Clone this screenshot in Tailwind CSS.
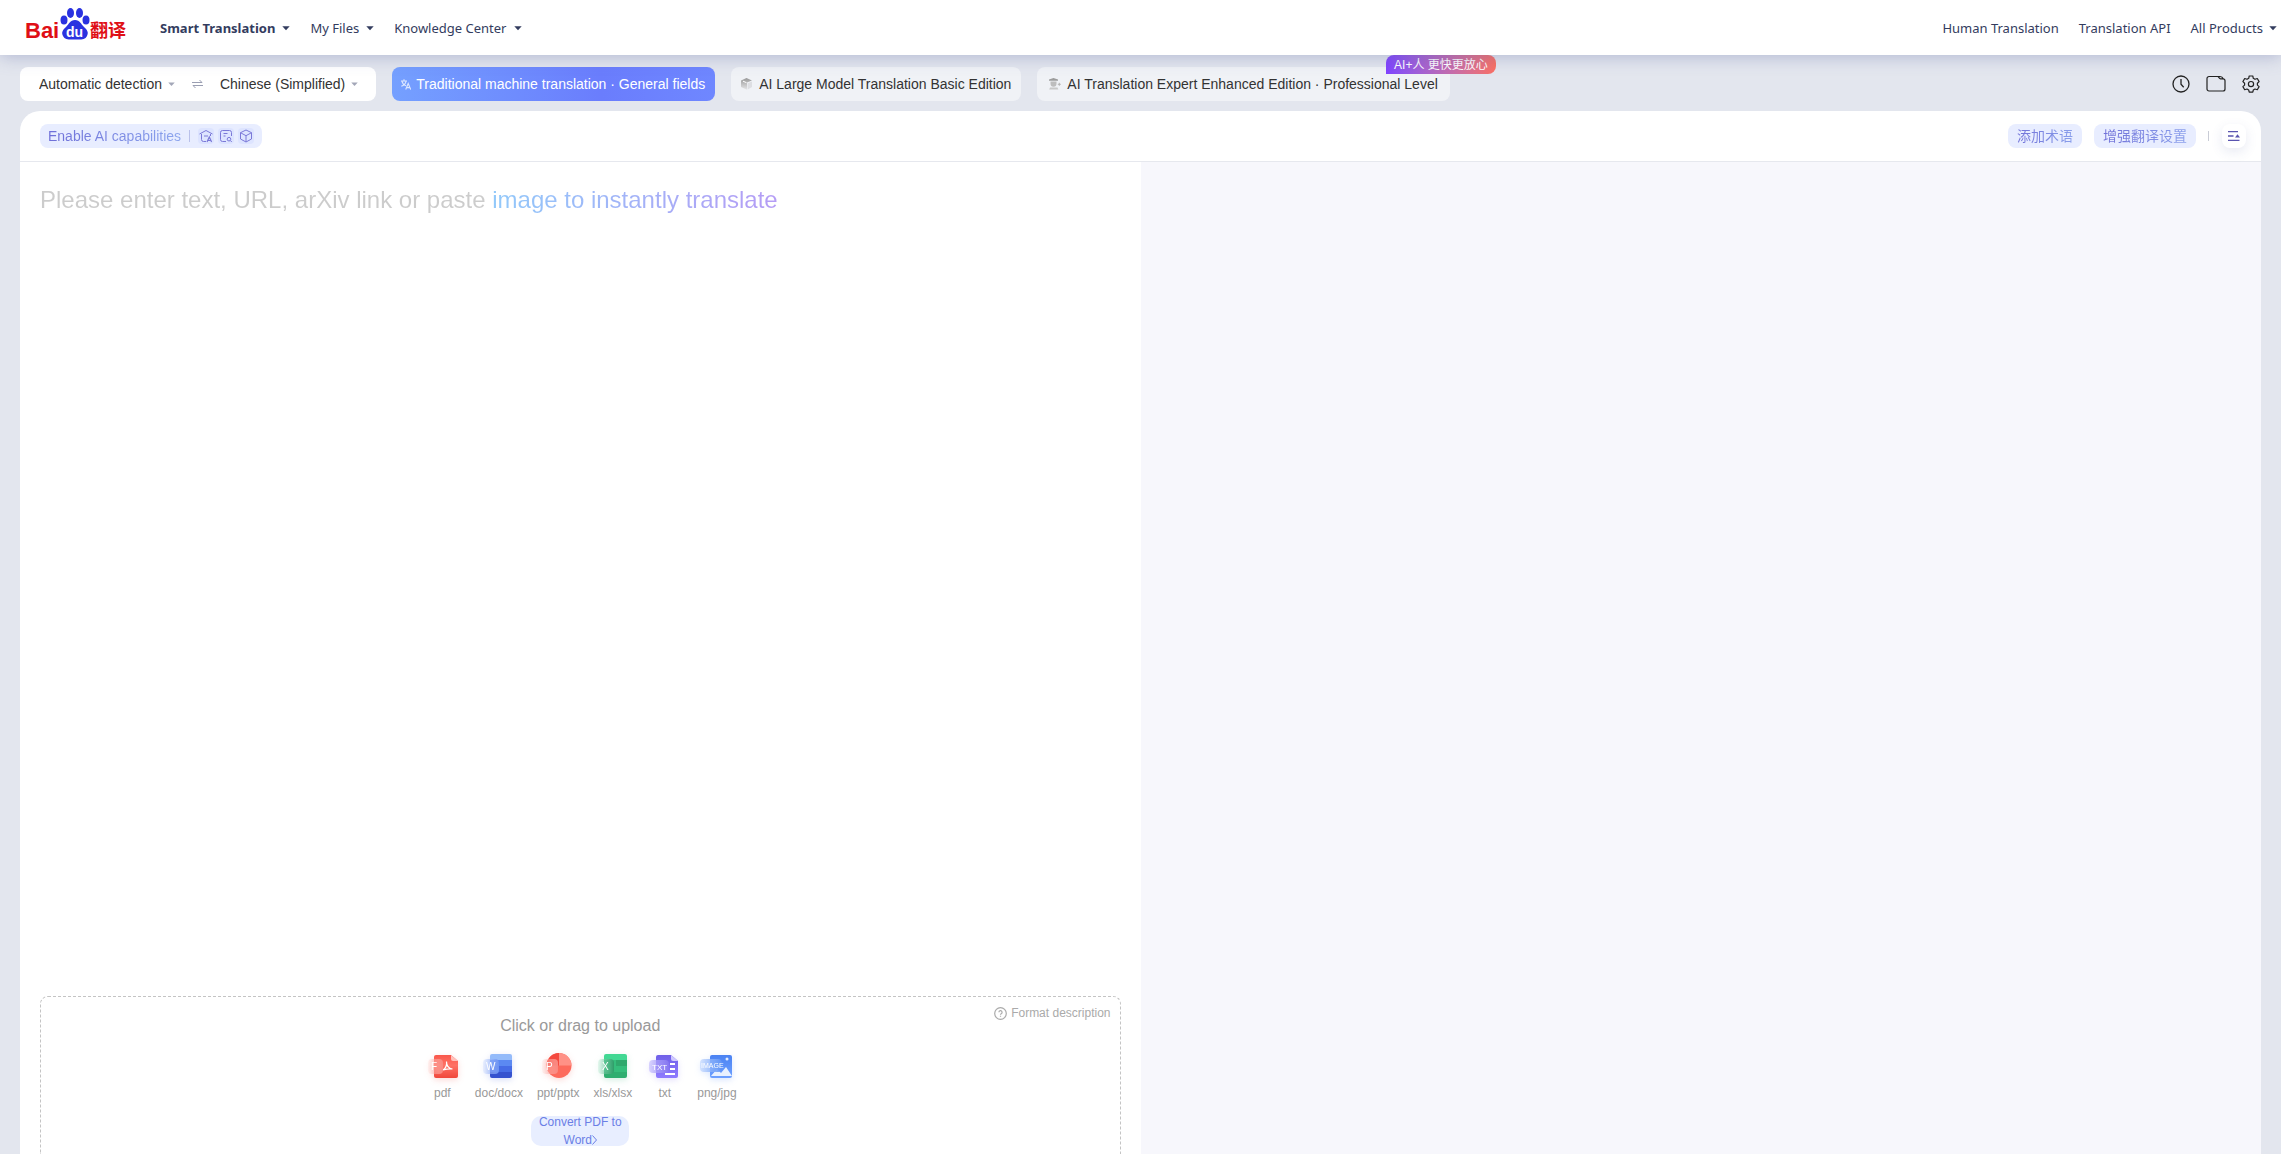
<!DOCTYPE html>
<html lang="en">
<head>
<meta charset="utf-8">
<title>Baidu Translate</title>
<script src="https://cdn.jsdelivr.net/npm/@tailwindcss/browser@4"></script>
</head>
<body class="flex h-screen flex-col overflow-hidden bg-[#e3e6ee] font-['Liberation_Sans','Noto_Sans_CJK_SC',sans-serif] text-sm text-[#333]">
<svg class="absolute h-0 w-0" aria-hidden="true">
  <defs>
    <symbol id="caret" viewBox="0 0 8 5"><path d="M.3 .3h7.400L4 4.300z" fill="currentColor"/></symbol>
    <linearGradient id="gRed" x1="0" y1="0" x2="0" y2="1"><stop offset="0" stop-color="#f9574b"/><stop offset=".45" stop-color="#ff7265"/><stop offset="1" stop-color="#f0473b"/></linearGradient>
    <linearGradient id="gPurple" x1="0" y1="0" x2="0" y2="1"><stop offset="0" stop-color="#6f5fe8"/><stop offset="1" stop-color="#8f7bff"/></linearGradient>
    <linearGradient id="gSky" x1="0" y1="0" x2="0" y2="1"><stop offset="0" stop-color="#4a82f3"/><stop offset="1" stop-color="#6fa1ff"/></linearGradient>
    <linearGradient id="tRed"><stop offset="0" stop-color="#ffc3be" stop-opacity=".15"/><stop offset="1" stop-color="#f98880"/></linearGradient>
    <linearGradient id="tBlue"><stop offset="0" stop-color="#b9ceff" stop-opacity=".25"/><stop offset="1" stop-color="#6d93f2"/></linearGradient>
    <linearGradient id="tGreen"><stop offset="0" stop-color="#a6e6c8" stop-opacity=".25"/><stop offset="1" stop-color="#2e9c68"/></linearGradient>
    <linearGradient id="tPurple"><stop offset="0" stop-color="#c4bcff" stop-opacity=".6"/><stop offset="1" stop-color="#8576f0"/></linearGradient>
    <linearGradient id="tSky"><stop offset="0" stop-color="#bcd4ff" stop-opacity=".6"/><stop offset="1" stop-color="#5f93f5"/></linearGradient>
    <linearGradient id="cube" x1="0" y1="0" x2="0" y2="1"><stop offset="0" stop-color="#999"/><stop offset="1" stop-color="#e4e4e6"/></linearGradient>
  </defs>
</svg>

<header class="z-10 flex h-[55px] shrink-0 items-center bg-white pl-6 pr-1 font-['Noto_Sans','Noto_Sans_CJK_SC',sans-serif] text-[13px] text-[#333c5e] shadow-[0_2px_16px_rgba(90,100,160,0.35)]">
  <a href="#" aria-label="Baidu Translate" class="mr-8 pb-2">
    <svg class="overflow-visible" width="104" height="34" viewBox="-2 0 104 34">
      <text x="-1" y="31" font-family="Liberation Sans" font-weight="700" font-size="22" fill="#df0f16">Bai</text>
      <g fill="#2a32e0">
        <ellipse cx="38" cy="13" rx="3.500" ry="4.500"/><ellipse cx="44.500" cy="6" rx="3.500" ry="5"/><ellipse cx="53.500" cy="6" rx="3.500" ry="5"/><ellipse cx="60" cy="13" rx="3.500" ry="4.500"/>
        <path d="M49 13c5 0 6 4 9 7s5 5 3 9-6 3.500-12 3.500-10 .5-12-3.500 0-6 3-9 4-7 9-7z"/>
      </g>
      <text x="40" y="30" font-family="Liberation Sans" font-weight="700" font-size="14" fill="#fff">du</text>
      <text x="64" y="30" font-family="Noto Sans CJK SC" font-weight="700" font-size="18" fill="#df0f16">翻译</text>
    </svg>
  </a>
  <nav class="flex grow items-center gap-5 pt-0.5">
    <a href="#" class="flex items-center gap-[7px] font-bold">Smart Translation <svg class="h-[5px] w-2"><use href="#caret"/></svg></a>
    <a href="#" class="flex items-center gap-[7px]">My Files <svg class="h-[5px] w-2"><use href="#caret"/></svg></a>
    <a href="#" class="flex items-center gap-[7px]">Knowledge Center <svg class="h-[5px] w-2"><use href="#caret"/></svg></a>
  </nav>
  <nav class="flex items-center gap-5 pt-0.5">
    <a href="#">Human Translation</a>
    <a href="#">Translation API</a>
    <a href="#" class="flex items-center gap-[6px]">All Products <svg class="h-[5px] w-2"><use href="#caret"/></svg></a>
  </nav>
</header>

<div class="flex shrink-0 items-center px-5 pb-2.5 pt-3">
  <div class="flex h-[34px] items-center rounded-lg bg-white pl-[19px] pr-[18px]">
    <label class="flex items-center gap-[6px]">
      <select aria-label="Source language" class="field-sizing-content appearance-none bg-transparent outline-none"><option>Automatic detection</option></select>
      <svg class="h-[5px] w-[7px] text-[#a3a7b8]"><use href="#caret"/></svg>
    </label>
    <button aria-label="Swap languages" class="mx-[17px]">
      <svg width="11" height="10" viewBox="0 0 11 10" fill="none" stroke="#9a9eb2" stroke-width="1"><path d="M0 3.500h10L7.500 1M11 6.500H1L3.500 9"/></svg>
    </button>
    <label class="flex items-center gap-[6px]">
      <select aria-label="Target language" class="field-sizing-content appearance-none bg-transparent outline-none"><option>Chinese (Simplified)</option></select>
      <svg class="h-[5px] w-[7px] text-[#a3a7b8]"><use href="#caret"/></svg>
    </label>
  </div>

  <div class="ml-4 flex gap-4">
    <button class="flex h-[34px] items-center gap-[5px] rounded-lg bg-linear-to-r from-[#75a0ff] via-[#6a7dfd] via-65% to-[#6f87ff] pl-[9px] pr-[10px] text-white">
      <svg width="10" height="11" viewBox="0 0 10 11" fill="none" stroke="#fff" stroke-opacity=".75" stroke-width="1.100"><path d="M0 2h6M3 .3V2M1 2.300c.5 2.200 2.200 3.700 4 4.400M5 2.300C4.500 4.800 2.500 6.500.3 7.300M4.700 10.500L7.200 4.500l2.500 6M5.600 8.600h3.200"/></svg>
      Traditional machine translation · General fields
    </button>
    <button class="flex h-[34px] items-center gap-[7px] rounded-lg bg-[#f0f2f6] px-[10px]">
      <svg width="11" height="12" viewBox="0 0 11 12"><path d="M5.500 0L11 2.500 6 4.500v7.200L0 9V2.600z" fill="url(#cube)"/><path d="M6.600 5.300L11 3.500V9l-4.400 2.500z" fill="#dddee2"/><path d="M2 3.200l3.500 1.500" stroke="#fff"/></svg>
      AI Large Model Translation Basic Edition
    </button>
    <div class="relative">
      <button class="flex h-[34px] items-center gap-[6px] rounded-lg bg-[#f0f2f6] pl-3 pr-3">
        <svg width="12" height="12" viewBox="0 0 12 12"><path d="M0 1.500L4.500 0 9 1.500v1.300H0z" fill="#9c9c9c"/><path d="M1.500 3.500h6v2.200a3 3 0 0 1-6 0z" fill="#bdbdbd"/><path d="M1 9.500h7.500l.8 2H.2z" fill="#c8c8c8"/><path d="M8.800 6.300h3M10.300 4.800v3" stroke="#b5b5b5"/></svg>
        AI Translation Expert Enhanced Edition · Professional Level
      </button>
      <span class="absolute -top-3 right-0 flex h-[19px] translate-x-[46px] items-center whitespace-nowrap rounded-lg rounded-bl-none bg-linear-to-r from-[#8142ff] to-[#fb6f61] px-2 text-xs text-white">AI+人 更快更放心</span>
    </div>
  </div>

  <div class="ml-auto flex items-center gap-4 pr-px text-[#222]">
    <button aria-label="History"><svg width="18" height="18" viewBox="0 0 18 18" fill="none" stroke="currentColor" stroke-width="1.300"><circle cx="9" cy="9" r="8"/><path d="M9 4v5.300l2.700 2.900"/></svg></button>
    <button aria-label="Files"><svg width="20" height="18" viewBox="0 0 20 18" fill="none" stroke="currentColor" stroke-width="1.200"><path d="M3 1.500h8.500c1.500 0 1.500 2.300 3 2.300H17a2 2 0 0 1 2 2V14a2 2 0 0 1-2 2H3a2 2 0 0 1-2-2V3.500a2 2 0 0 1 2-2zM11.500 1.500H14a3.500 3.500 0 0 1 3.200 2.300"/></svg></button>
    <button aria-label="Settings"><svg width="18" height="18" viewBox="0 0 18 18" fill="none" stroke="currentColor" stroke-width="1.200" stroke-linejoin="round"><path d="M7.200 1h3.600l.5 2.300 1.700 1 2.300-.8 1.800 3.100L15.400 8.200v1.900l1.700 1.500-1.800 3.100-2.300-.7-1.700 1-.5 2.200H7.200l-.5-2.200-1.700-1-2.300.7-1.800-3.100 1.700-1.500V8.200L.9 6.600l1.800-3.100 2.300.8 1.700-1z"/><circle cx="9" cy="9.100" r="2.600"/></svg></button>
  </div>
</div>

<main class="mx-5 flex grow flex-col overflow-hidden rounded-t-[20px] bg-white">
  <div class="flex h-[51px] shrink-0 items-center border-b border-[#e6e8ee] pl-5 pr-[15px]">
    <button class="flex h-6 items-center rounded-lg bg-[#e8edff] px-2">
      <span class="bg-linear-to-r from-[#6f6fd8] to-[#8ca5ee] bg-clip-text text-transparent">Enable AI capabilities</span>
      <span class="ml-2 mr-2 h-3 w-px bg-[#b9c0ea]"></span>
      <span class="flex gap-1 text-[#7b79d8]">
        <svg class="h-4 w-4 rounded-sm bg-[#dde4ff]" viewBox="0 0 16 16" fill="none" stroke="currentColor"><path d="M1.500 6L8 2.500 14.500 6M3.500 6v5.500a2 2 0 0 0 2 2H8M12.500 6v2M6 8h4"/><path d="M9 14l2.300-5 2.300 5M10 12.500h2.700" stroke-width="1.200"/></svg>
        <svg class="h-4 w-4 rounded-sm bg-[#dde4ff]" viewBox="0 0 16 16" fill="none" stroke="currentColor"><path d="M8 13.500H4.500a2 2 0 0 1-2-2v-7a2 2 0 0 1 2-2h7a2 2 0 0 1 2 2V8M5.500 5.500h4M5.500 8h2"/><circle cx="11" cy="11.200" r="1.800"/><path d="M12.400 12.600l1.400 1.400"/></svg>
        <svg class="h-4 w-4 rounded-sm bg-[#dde4ff]" viewBox="0 0 16 16" fill="none" stroke="currentColor" stroke-linejoin="round"><path d="M8 2l5.500 2.700v6.300L8 14l-5.500-3V4.700zM2.500 4.700L8 7.700l5.500-3M8 7.700V14"/></svg>
      </span>
    </button>
    <div class="ml-auto flex items-center">
      <button class="h-6 rounded-lg bg-[#e8edff] px-[9px]"><span class="bg-linear-to-r from-[#7272d8] to-[#8a9fec] bg-clip-text text-transparent">添加术语</span></button>
      <button class="ml-3 h-6 rounded-lg bg-[#e8edff] px-[9px]"><span class="bg-linear-to-r from-[#7272d8] to-[#8a9fec] bg-clip-text text-transparent">增强翻译设置</span></button>
      <span class="ml-3 mr-[13px] h-[10px] w-px bg-[#c9ccd6]"></span>
      <button aria-label="Toggle sidebar" class="flex size-6 items-center justify-center rounded-lg bg-white shadow-[0_4px_12px_rgba(80,90,160,0.13)]">
        <svg width="12" height="10" viewBox="0 0 12 10" fill="none" stroke="#5a54b0" stroke-width="1.300"><path d="M0 .7h10M0 5h5.500M0 9.300h11.500"/><path d="M7 6.500L9.500 3.300 12 6.500z" fill="#5a54b0" stroke="none"/></svg>
      </button>
    </div>
  </div>

  <div class="grid grow grid-cols-2">
    <section class="flex flex-col px-5">
      <textarea aria-label="Text to translate" class="w-full grow resize-none pt-[22px] text-2xl leading-8 outline-none placeholder:bg-[linear-gradient(90deg,#ccc_452px,#92c9fa_453px,#b59cf5_738px)] placeholder:bg-clip-text placeholder:text-transparent" placeholder="Please enter text, URL, arXiv link or paste image to instantly translate"></textarea>
      <div class="relative flex shrink-0 flex-col items-center rounded-t-lg border border-b-0 border-dashed border-[#c4c4c4] pb-2 pt-[19px] text-[#999]">
        <a href="#" class="absolute right-[9px] top-2 flex items-center gap-1 text-xs text-[#aaa]">
          <svg width="13" height="13" viewBox="0 0 13 13" fill="none" stroke="currentColor" stroke-width="1.200"><circle cx="6.500" cy="6.500" r="5.800"/><path d="M4.900 5.200a1.600 1.600 0 1 1 2.300 1.500c-.5.300-.7.500-.7 1.100M6.500 8.700v1.100"/></svg>
          Format description
        </a>
        <p class="text-base leading-5">Click or drag to upload</p>
        <ul class="mt-4 flex gap-[14px] text-xs leading-4">
          <li class="flex min-w-[37px] flex-col items-center gap-[5px]">
            <svg class="overflow-visible drop-shadow-[0_2px_3px_rgba(240,70,60,0.2)]" width="32" height="28" viewBox="0 0 32 28"><path d="M10 3h15l7 6v15a2 2 0 0 1-2 2H10a2 2 0 0 1-2-2V5a2 2 0 0 1 2-2z" fill="url(#gRed)"/><path d="M25 3l7 6h-5a2 2 0 0 1-2-2z" fill="#ffc1bb"/><path d="M17 18c3-2 4-5 3.500-8.500C20.500 14 23 16.500 26.500 17c-3-.6-6 0-9.500 1z" fill="none" stroke="#fff" stroke-width="1.200"/><rect x="2" y="7" width="15" height="15" rx="4" fill="url(#tRed)"/><text x="5" y="18" font-size="10" fill="#fff">F</text></svg>
            pdf
          </li>
          <li class="flex min-w-[37px] flex-col items-center gap-[5px]">
            <svg class="overflow-visible drop-shadow-[0_2px_3px_rgba(60,90,220,0.2)]" width="32" height="28" viewBox="0 0 32 28"><path d="M7 4a2 2 0 0 1 2-2h18a2 2 0 0 1 2 2v4H7z" fill="#94bbfa"/><path d="M7 8h22v6H7z" fill="#5b89f2"/><path d="M7 14h22v6H7z" fill="#466ce6"/><path d="M7 20h22v4a2 2 0 0 1-2 2H9a2 2 0 0 1-2-2z" fill="#3552cf"/><rect x="0" y="7" width="16" height="15" rx="4" fill="url(#tBlue)"/><text x="3" y="18" font-size="10" fill="#fff">W</text></svg>
            doc/docx
          </li>
          <li class="flex min-w-[37px] flex-col items-center gap-[5px]">
            <svg class="overflow-visible drop-shadow-[0_2px_3px_rgba(240,70,60,0.2)]" width="32" height="28" viewBox="0 0 32 28"><circle cx="17" cy="13.500" r="12.500" fill="#fd6a5c"/><path d="M17 1a12.500 12.500 0 0 0-12.500 12.500H17z" fill="#f4493e"/><path d="M17 1a12.500 12.500 0 0 1 12.500 12.500H17z" fill="#ff9186"/><rect x="0" y="7" width="16" height="15" rx="4" fill="url(#tRed)"/><text x="4" y="18" font-size="10" fill="#fff">P</text></svg>
            ppt/pptx
          </li>
          <li class="flex min-w-[37px] flex-col items-center gap-[5px]">
            <svg class="overflow-visible drop-shadow-[0_2px_3px_rgba(40,170,110,0.2)]" width="32" height="28" viewBox="0 0 32 28"><path d="M7 4a2 2 0 0 1 2-2h19a2 2 0 0 1 2 2v4H7z" fill="#41d893"/><path d="M7 8h23v12H7z" fill="#35bd7b"/><path d="M19 8h11v6H19z" fill="#2fa86c"/><path d="M7 20h23v4a2 2 0 0 1-2 2H9a2 2 0 0 1-2-2z" fill="#2fae70"/><rect x="1" y="7" width="16" height="15" rx="4" fill="url(#tGreen)"/><text x="5" y="18" font-size="10" fill="#fff">X</text></svg>
            xls/xlsx
          </li>
          <li class="flex min-w-[37px] flex-col items-center gap-[5px]">
            <svg class="overflow-visible drop-shadow-[0_2px_3px_rgba(120,100,240,0.2)]" width="32" height="28" viewBox="0 0 32 28"><path d="M9 3h13l7 6v15a2 2 0 0 1-2 2H9a2 2 0 0 1-2-2V5a2 2 0 0 1 2-2z" fill="url(#gPurple)"/><path d="M22 3l7 6h-5a2 2 0 0 1-2-2z" fill="#cfc8ff"/><path d="M21 12h5M21 17h5M16 22h10" stroke="#fff" stroke-width="2"/><rect x="0" y="8" width="20" height="13" rx="4" fill="url(#tPurple)"/><text x="3" y="18" font-size="8" fill="#fff">TXT</text></svg>
            txt
          </li>
          <li class="flex min-w-[37px] flex-col items-center gap-[5px]">
            <svg class="overflow-visible drop-shadow-[0_2px_3px_rgba(70,130,250,0.2)]" width="32" height="28" viewBox="0 0 32 28"><rect x="9" y="3" width="22" height="23" rx="2" fill="url(#gSky)"/><path d="M10 24l6-7 4 4 5-6 6 9z" fill="#e9f1ff"/><circle cx="26" cy="7" r="1.500" fill="#e2ecff"/><rect x="-1" y="7" width="22" height="13" rx="4" fill="url(#tSky)"/><text x="0" y="16" font-size="7" fill="#fff">IMAGE</text></svg>
            png/jpg
          </li>
        </ul>
        <button class="mt-[15px] flex h-[30px] w-[98px] items-center justify-center rounded-[10px] bg-[#e8eeff] pb-px text-xs leading-[18px] text-[#6b7fe6]">
          <span>Convert PDF to<br><span class="inline-flex items-center">Word<svg width="5" height="10" viewBox="0 0 5 10" fill="none" stroke="currentColor"><path d="M.5 .5L4.500 5 .5 9.500"/></svg></span></span>
        </button>
      </div>
    </section>
    <section aria-label="Translation result" class="bg-[#f7f7fc]"></section>
  </div>
</main>
</body>
</html>
